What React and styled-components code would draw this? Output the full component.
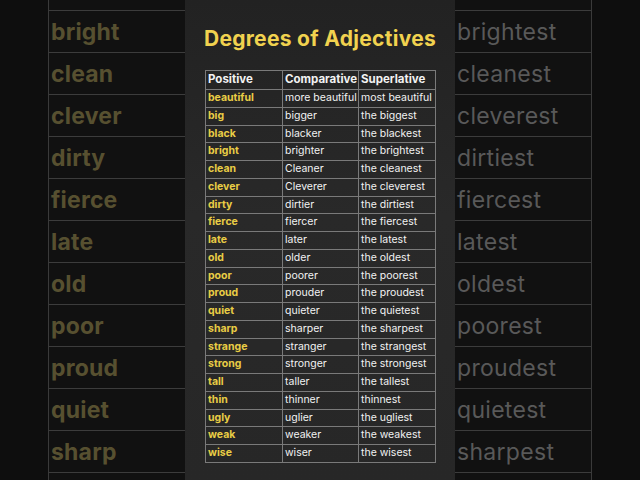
import React from "react";
import styled, { createGlobalStyle } from "styled-components";

const GlobalStyle = createGlobalStyle`
  html, body {
    margin: 0;
    padding: 0;
    background: #0d0d0d;
    font-family: "Inter", "Liberation Sans", sans-serif;
  }
`;

const rows = [
  ["beautiful", "more beautiful", "most beautiful"],
  ["big", "bigger", "the biggest"],
  ["black", "blacker", "the blackest"],
  ["bright", "brighter", "the brightest"],
  ["clean", "Cleaner", "the cleanest"],
  ["clever", "Cleverer", "the cleverest"],
  ["dirty", "dirtier", "the dirtiest"],
  ["fierce", "fiercer", "the fiercest"],
  ["late", "later", "the latest"],
  ["old", "older", "the oldest"],
  ["poor", "poorer", "the poorest"],
  ["proud", "prouder", "the proudest"],
  ["quiet", "quieter", "the quietest"],
  ["sharp", "sharper", "the sharpest"],
  ["strange", "stranger", "the strangest"],
  ["strong", "stronger", "the strongest"],
  ["tall", "taller", "the tallest"],
  ["thin", "thinner", "thinnest"],
  ["ugly", "uglier", "the ugliest"],
  ["weak", "weaker", "the weakest"],
  ["wise", "wiser", "the wisest"],
];

const leftWords = ["bright", "clean", "clever", "dirty", "fierce", "late", "old", "poor", "proud", "quiet", "sharp"];
const rightWords = ["brightest", "cleanest", "cleverest", "dirtiest", "fiercest", "latest", "oldest", "poorest", "proudest", "quietest", "sharpest"];

const Screen = styled.div`
  display: flex;
  width: 640px;
  height: 480px;
  overflow: hidden;
  background: #0d0d0d;
`;

const Strip = styled.div`
  width: ${(p) => p.$w}px;
  flex-shrink: 0;
  background: #0e0e0e;
`;

const SideColumn = styled.div`
  width: ${(p) => p.$w}px;
  flex-shrink: 0;
  padding-top: 10px;
  background: #111111;
  border-left: ${(p) => (p.$edge === "left" ? "1px solid #3a3a3a" : "none")};
  border-right: ${(p) => (p.$edge === "right" ? "1px solid #3a3a3a" : "none")};
  box-sizing: border-box;
`;

const SideRow = styled.div`
  height: 42px;
  box-sizing: border-box;
  border-top: 1px solid #3c3c3c;
  display: flex;
  align-items: center;
  padding-left: 2px;
  font-size: 23px;
  font-weight: ${(p) => (p.$bold ? 700 : 400)};
  color: ${(p) => (p.$bold ? "#575030" : "#595959")};
  letter-spacing: ${(p) => (p.$bold ? "0.2px" : "0.3px")};
`;

const Panel = styled.div`
  width: 270px;
  flex-shrink: 0;
  background: linear-gradient(180deg, #222222 0%, #292929 45%, #272727 100%);
  display: flex;
  flex-direction: column;
  align-items: center;
  padding-top: 27px;
  box-sizing: border-box;
`;

const Title = styled.h1`
  margin: 0 0 19px;
  font-size: 21px;
  font-weight: 700;
  color: #f1d24f;
  letter-spacing: 0.3px;
  line-height: 24px;
`;

const Table = styled.table`
  border-collapse: collapse;
  table-layout: fixed;
  width: 231px;
  margin-left: 1px;
`;

const Cell = styled.td`
  border: 1px solid #7a7a7a;
  height: ${(p) => (p.$head ? 18 : 16.75)}px;
  padding: 0 0 0 2px;
  line-height: 1;
  white-space: nowrap;
  overflow: hidden;
  text-align: left;
  font-weight: ${(p) => (p.$head || p.$accent ? 700 : 400)};
  font-size: ${(p) => (p.$head ? "11.5px" : "10.5px")};
  color: ${(p) => (p.$accent ? "#e9cd45" : "#f2f2f2")};
`;

export default function App() {
  return (
    <>
      <GlobalStyle />
      <Screen>
        <Strip $w={48} />
        <SideColumn $w={137} $edge="left">
          {leftWords.map((w) => (
            <SideRow key={w} $bold>{w}</SideRow>
          ))}
          <SideRow />
        </SideColumn>
        <Panel>
          <Title>Degrees of Adjectives</Title>
          <Table>
            <colgroup>
              <col style={{ width: 77 }} />
              <col style={{ width: 76 }} />
              <col style={{ width: 77 }} />
            </colgroup>
            <thead>
              <tr>
                <Cell as="th" $head>Positive</Cell>
                <Cell as="th" $head>Comparative</Cell>
                <Cell as="th" $head>Superlative</Cell>
              </tr>
            </thead>
            <tbody>
              {rows.map(([a, b, c]) => (
                <tr key={a}>
                  <Cell $accent>{a}</Cell>
                  <Cell>{b}</Cell>
                  <Cell>{c}</Cell>
                </tr>
              ))}
            </tbody>
          </Table>
        </Panel>
        <SideColumn $w={137} $edge="right">
          {rightWords.map((w) => (
            <SideRow key={w}>{w}</SideRow>
          ))}
          <SideRow />
        </SideColumn>
        <Strip $w={48} />
      </Screen>
    </>
  );
}
